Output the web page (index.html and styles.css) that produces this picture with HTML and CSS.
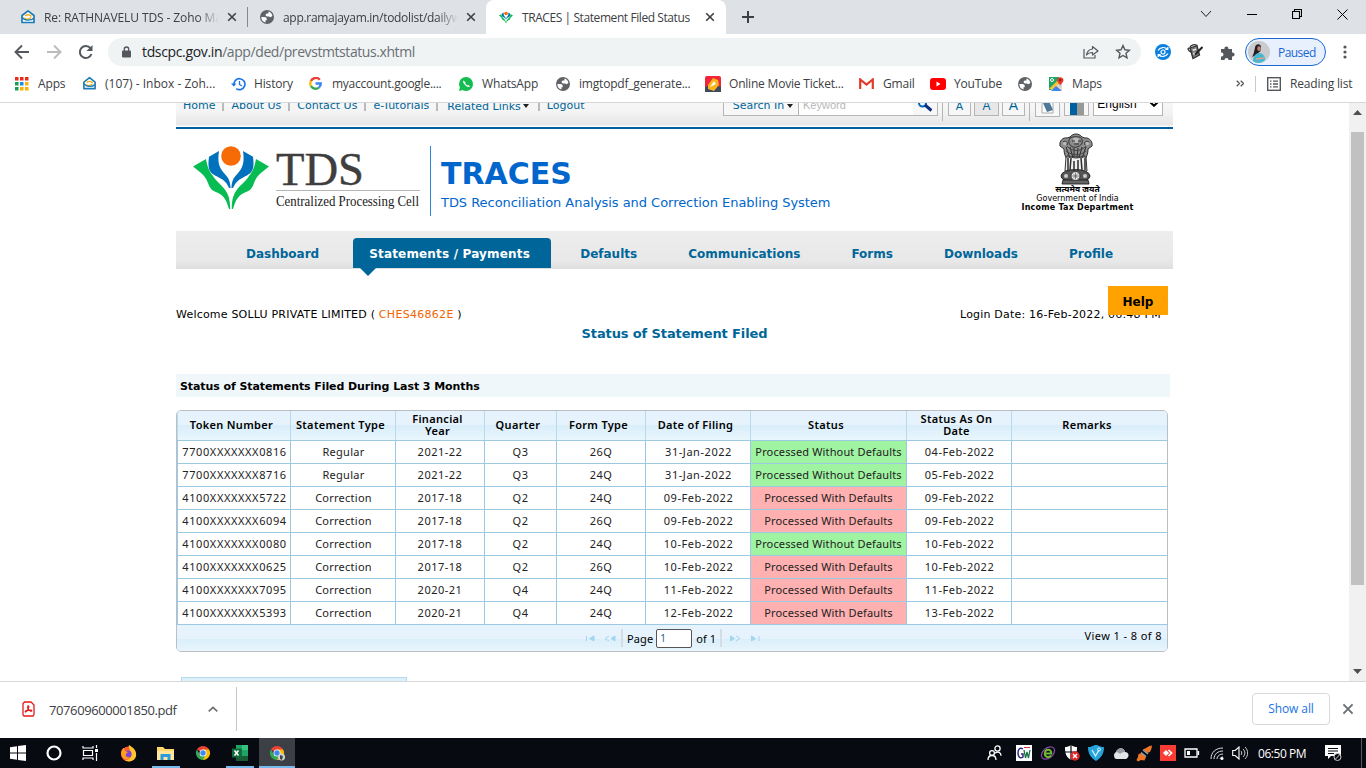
FILE: index.html
```html
<!DOCTYPE html>
<html lang="en">
<head>
<meta charset="utf-8">
<title>TRACES | Statement Filed Status</title>
<link rel="stylesheet" href="styles.css">
</head>
<body>
<svg class="defs" width="0" height="0">
  <symbol id="zoho" viewBox="0 0 16 16"><path d="M2 6.500 8 1.800l6 4.700V13.500H2z" fill="#fff" stroke="#1c7cb8" stroke-width="1.700" stroke-linejoin="round"/><path d="M5 7c2-2 5-1.500 6.500.5M4 9c2 2 5 1.500 7-.5" stroke="#f2b01e" stroke-width="1.500" fill="none"/><path d="M2 8c2 4 9 4 12 1" stroke="#1c7cb8" stroke-width="1.400" fill="none"/></symbol>
  <symbol id="globe" viewBox="0 0 16 16"><circle cx="8" cy="8" r="7" fill="#5f6368"/><path d="M2.300 8h3c1.700 0 2.400.8 2.400 2v1.200H6.500v2.300C4 13 2.300 11 2.300 8zM9.500 2.500c2 .5 3.300 2 3.900 4l-1 1.300c-.8.8-1.700.4-2.200-.4H8.300C7 7.400 6.500 6.600 6.700 5.600c.2-.8.9-1.200 1.800-1.200h1z" fill="#fff"/></symbol>
  <symbol id="lotus" viewBox="0 0 76 64"><circle cx="38" cy="10" r="9.800" fill="#f76b07"/><path id="petal" d="M26 5 16 10.700C14 26 18 27 25 31 33 35 34 38 36 42L37.600 42C37 30 32 30 28 23 25 18 25 12 26 5z" fill="#0071bc"/><path d="M50 5 60 10.700C62 26 58 27 51 31 43 35 42 38 40 42L38.400 42C39 30 44 30 48 23 51 18 51 12 50 5z" fill="#0071bc"/><path d="M13 13 0 20.500C8 27 12 29 15 37 18 46 22 45 27 48 33 52 34 57 36 63L37.200 63C37.500 42 27 41 20 30 15 24 14 18 13 13z" fill="#07bc53"/><path d="M63 13 76 20.500C68 27 64 29 61 37 58 46 54 45 49 48 43 52 42 57 40 63L38.800 63C38.500 42 49 41 56 30 61 24 62 18 63 13z" fill="#07bc53"/></symbol>
  <symbol id="x" viewBox="0 0 10 10"><path d="m1.200 1.200 7.600 7.600M8.800 1.200 1.200 8.800" stroke="currentColor" stroke-width="1.600" fill="none"/></symbol>
  <symbol id="chrome" viewBox="0 0 16 16"><path d="M8 8 1.900 4.500A7 7 0 0 1 14.100 4.500z" fill="#e94335"/><path d="M8 8V4.500h6.100A7 7 0 0 1 8 15z" fill="#fbbc05"/><path d="M8 8 10.500 10 8 15A7 7 0 0 1 1.900 4.500L5 9.700z" fill="#34a853"/><circle cx="8" cy="8" r="3.500" fill="#fff"/><circle cx="8" cy="8" r="2.700" fill="#4285f4"/></symbol>
</svg>

<header class="tabs">
  <div class="tab tab-a"><svg width="16" height="16"><use href="#zoho"/></svg><span class="fade">Re: RATHNAVELU TDS - Zoho Mail</span><svg class="close" width="10" height="10"><use href="#x"/></svg></div>
  <div class="tab tab-b"><svg width="16" height="16"><use href="#globe"/></svg><span class="fade">app.ramajayam.in/todolist/dailywork</span><svg class="close" width="10" height="10"><use href="#x"/></svg></div>
  <div class="tab tab-c"><svg width="14" height="13"><use href="#lotus"/></svg><span>TRACES | Statement Filed Status</span><svg class="close" width="10" height="10"><use href="#x"/></svg></div>
  <svg class="plus" width="12" height="12"><path d="M6 0v12M0 6h12" stroke="#3c4043" stroke-width="2"/></svg>
  <div class="winctl">
    <svg width="12" height="8"><path d="m1 1 5 5.500L11 1" fill="none" stroke="#222"/></svg>
    <svg width="10" height="8"><path d="M0 4.500h10" stroke="#000"/></svg>
    <svg width="10" height="10"><path d="M.5 2.500h7v7h-7zM2.500 2.500v-2h7v7h-2" fill="none" stroke="#000" stroke-width="1.100"/></svg>
    <svg width="11" height="11"><path d="m.5.5 10 10M10.500.5l-10 10" stroke="#000" fill="none"/></svg>
  </div>
</header>

<div class="toolbar">
  <svg width="16" height="16"><path d="M15 8H2M8 1.500 1.500 8 8 14.500" fill="none" stroke="#54585c" stroke-width="1.900"/></svg>
  <svg width="16" height="16"><path d="M1 8h13M8 1.500 14.500 8 8 14.500" fill="none" stroke="#babcbe" stroke-width="1.900"/></svg>
  <svg width="16" height="16"><path d="M13.500 10A6 6 0 1 1 12.500 4.200" fill="none" stroke="#54585c" stroke-width="2"/><path d="M14.500 1v6h-6z" fill="#54585c"/></svg>
  <div class="omni">
    <svg width="9" height="12"><path d="M2.300 5V3.200a2.200 2.200 0 0 1 4.400 0V5" fill="none" stroke="#54585c" stroke-width="1.300"/><rect y="4.500" width="9" height="7" rx="1" fill="#54585c"/></svg>
    <span class="url"><b>tdscpc.gov.in</b>/app/ded/prevstmtstatus.xhtml</span>
    <svg width="16" height="14"><path d="M1 4v9h11v-3" fill="none" stroke="#54585c" stroke-width="1.200"/><path d="M9.500 1.500 15 6l-5.500 4V7.500C6.500 7.500 5 8 3.500 10 4 6.500 6 4.500 9.500 4z" fill="none" stroke="#54585c" stroke-width="1.200" stroke-linejoin="round"/></svg>
    <svg width="16" height="16"><path d="m8 1.500 1.900 4.300 4.600.4L11 9.300l1 4.600-4-2.400-4 2.400 1-4.600L1.500 6.200l4.600-.4z" fill="none" stroke="#54585c" stroke-width="1.400"/></svg>
  </div>
  <svg class="ext1" width="16" height="16"><circle cx="8" cy="8" r="8" fill="#0b7fe0"/><path d="M3 6.500c2-3.500 7-4 9.500-1M13 9.500c-2 3.500-7 4-9.500 1M12.800 3v2.500h-2.500M3.200 13v-2.500h2.500" fill="none" stroke="#fff" stroke-width="1.200"/><circle cx="8" cy="8" r="2" fill="none" stroke="#fff" stroke-width="1.200"/></svg>
  <svg class="ext2" width="16" height="16"><path d="m3 4 7-2.500L12.500 11 6 14.500z" fill="#777" stroke="#333" stroke-width="1.300"/><path d="m5.500 5.500 3.500-1 .4 1.500-3.500 1zM6 9l3-1 .5 1.500-3 1.500z" fill="#eee"/><path d="M3 4.500C0 3 .5 7 4.500 8M3 3.500C4 .5 8 0 10 1.500" stroke="#333" stroke-width="1.300" fill="none"/><path d="M8 10.500 15.500 3" stroke="#222" stroke-width="2"/></svg>
  <svg class="ext3" width="15" height="15"><path d="M1 4h3.500a2 2 0 1 1 3.800 0H12v3.600a2 2 0 1 1 0 3.800V15H8.500a2 2 0 1 0-4 0H1v-3.600a2 2 0 1 0 0-3.900z" fill="#54585c"/></svg>
  <div class="profile"><svg width="22" height="22"><circle cx="11" cy="11" r="11" fill="#c9cbcf"/><path d="M7 7c0-4 5-5 6-1.500L12.500 10 8 14l-4 2c2-3 2-6 3-9z" fill="#251c20"/><ellipse cx="11" cy="7.500" rx="1.800" ry="2.500" fill="#b98370"/><path d="M5 20c0-5 3-8 6-8s6 2 6 7c-3 3.500-9 4-12 1z" fill="#49b6cf"/><path d="m8 18 8-1" stroke="#d9a58f" stroke-width="1.500"/></svg><span>Paused</span></div>
  <svg class="dots" width="4" height="14"><g fill="#54585c"><circle cx="2" cy="2" r="1.600"/><circle cx="2" cy="7" r="1.600"/><circle cx="2" cy="12" r="1.600"/></g></svg>
</div>

<nav class="marks">
  <a><svg width="14" height="14"><g fill="#ea2a1c"><path d="M0 0h3.500v3.500H0zM5 0h3.500v3.500H5zM10 0h3.500v3.500H10z"/></g><path d="M0 5h3.500v3.500H0zM0 10h3.500v3.500H0z" fill="#16a050"/><path d="M5 5h3.500v3.500H5z" fill="#1c8ae8"/><path d="M10 5h3.500v3.500H10zM5 10h3.500v3.500H5zM10 10h3.500v3.500H10z" fill="#f8b406"/></svg><span>Apps</span></a>
  <a><svg width="15" height="15"><use href="#zoho"/></svg><span>(107) - Inbox - Zoh...</span></a>
  <a><svg width="15" height="14"><path d="M3 8A5.500 5.500 0 1 1 5.200 11.600" fill="none" stroke="#1a73e8" stroke-width="1.600"/><path d="M0 6.500h5.500L2.800 9.500z" fill="#1a73e8"/><path d="M8.500 4v3.500l2.500 1.500" fill="none" stroke="#1a73e8" stroke-width="1.300"/></svg><span>History</span></a>
  <a><svg width="13" height="13" viewBox="0 0 12 12"><g fill="none" stroke-width="2.200"><path d="M10 2.600A4.900 4.900 0 0 0 1.800 3.700" stroke="#ea4335"/><path d="M1.800 3.700a4.900 4.900 0 0 0 0 4.600" stroke="#fbbc05"/><path d="M1.800 8.300a4.900 4.900 0 0 0 7.300 1.500" stroke="#34a853"/><path d="M9.100 9.800A4.900 4.900 0 0 0 10.900 6H6" stroke="#4285f4"/></g></svg><span class="t0">myaccount.google....</span></a>
  <a><svg width="14" height="14"><circle cx="7" cy="7" r="7" fill="#12bd50"/><path d="m0 14 1-4 3 3z" fill="#12bd50"/><path d="M4.500 3.500c-1 1-.5 2.500 1.500 4.500s4 2.700 5 1.500l-1.700-1.600-1 .7L6 6.300l.7-.9z" fill="#fff"/></svg><span>WhatsApp</span></a>
  <a><svg width="16" height="16"><use href="#globe"/></svg><span class="t1">imgtopdf_generate...</span></a>
  <a><svg width="16" height="16"><rect width="16" height="16" rx="2" fill="#f02638"/><path d="M0 11 8 8l8 3v5H0z" fill="#3c4a5c"/><path d="M3 9 8 2l5 2 1 5-5 6-6-2z" fill="#f9b51c"/><path d="m5 11 4-6 2 3z" fill="#fff"/></svg><span class="t1">Online Movie Ticket...</span></a>
  <a><svg width="15" height="11"><path d="M1.200 11V1.500l6.300 5 6.300-5V11" fill="none" stroke="#e3392b" stroke-width="2.200"/></svg><span class="t1">Gmail</span></a>
  <a><svg width="16" height="12"><rect width="16" height="12" rx="3" fill="#f00"/><path d="m6.500 3.500 4 2.500-4 2.500z" fill="#fff"/></svg><span class="t1">YouTube</span></a>
  <a><svg width="16" height="16"><use href="#globe"/></svg></a>
  <a><svg width="15" height="15"><path d="M0 1h10v6L2 14H0z" fill="#1fa463"/><path d="m0 13 12-12v13z" fill="#f5c33b"/><path d="m2 15 5-5 6 5z" fill="#3f83f1"/><path d="m7 9 5 5h1V7z" fill="#d8d8d8"/><path d="M11 10c0-2-3-3.500-3-6a3.300 3.300 0 0 1 6.500 0c0 2.500-3 4-3.500 6z" fill="#ea3a2d"/><circle cx="11.200" cy="4" r="1.200" fill="#8c1c14"/><circle cx="3" cy="4" r="1.500" fill="none" stroke="#fff"/></svg><span>Maps</span></a>
  <a class="more"><svg width="8" height="7"><path d="m.7.7 2.800 2.800L.7 6.300M4.700.7l2.800 2.800-2.800 2.800" fill="none" stroke="#54585c" stroke-width="1.300"/></svg></a>
  <a class="reading"><svg width="14" height="14"><rect x=".7" y=".7" width="12.600" height="12.600" fill="none" stroke="#54585c" stroke-width="1.400"/><path d="M3 4.200h1.500M3 7h1.500M3 9.800h1.500M6 4.200h5M6 7h5M6 9.800h5" stroke="#54585c" stroke-width="1.300"/></svg><span>Reading list</span></a>
</nav>

<main class="view">
  <div class="page">
    <div class="topbar">
      <div class="links"><a>Home</a><i></i><a>About Us</a><i></i><a>Contact Us</a><i></i><a>e-Tutorials</a><i></i><a class="low">Related Links<svg width="6" height="4"><path d="M0 0h6L3 4z" fill="#222"/></svg></a><i></i><a>Logout</a></div>
      <div class="tools">
        <div class="box sin">Search In<svg width="6" height="4"><path d="M0 0h6L3 4z" fill="#222"/></svg></div><div class="box key">Keyword</div><div class="box mag"><svg width="14" height="14"><circle cx="4.500" cy="4" r="3.500" fill="none" stroke="#06b" stroke-width="2"/><path d="m7 6 6.500 5.500" stroke="#0b2f7e" stroke-width="3"/></svg></div>
        <i class="sep s1"></i>
        <div class="box a1">A</div><div class="box a2">A</div><div class="box a3">A</div>
        <i class="sep s2"></i>
        <div class="box p1"><svg width="13" height="16"><path d="M1 1h11v14H1z" fill="#fff" stroke="#a9a9a9"/><path d="m2 5 6-2 4 9-6 2z" fill="#4f7797"/></svg></div>
        <div class="box p2"><svg width="14" height="18"><path d="M0 0h7v18H0z" fill="#0060a0"/><path d="M7 0h7v18H7z" fill="#989898"/></svg></div>
        <div class="box lang">English<svg width="10" height="6"><path d="m1 1 4 3.800L9 1" fill="none" stroke="#000" stroke-width="2"/></svg></div>
      </div>
    </div>
    <div class="brand">
      <svg class="flower" width="76" height="64"><use href="#lotus"/></svg>
      <div class="tds"><svg width="144" height="66"><text class="tds-big" x="0" y="38.500" textLength="88" lengthAdjust="spacingAndGlyphs">TDS</text><path d="M0 44.500h144" stroke="#b5b5b5"/><text class="tds-small" x="0" y="60" textLength="143" lengthAdjust="spacingAndGlyphs">Centralized Processing Cell</text></svg></div>
      <div class="traces"><h1>TRACES</h1><p>TDS Reconciliation Analysis and Correction Enabling System</p></div>
      <div class="govt">
        <svg width="36" height="52" viewBox="0 0 36 52"><g stroke="#1c1c1c" fill="#8c8c8c" stroke-width=".9"><path d="M12 4c3-4 9-4 12 0l3 1c5-1 8 5 7 8l-4 3c0 6-2 9-4 11H10c-3-3-4-7-4-11l-4-3C1 8 5 4 9 5z"/><path d="M8 24h20l1 14H7z" fill="#eee"/><ellipse cx="17.500" cy="43" rx="14.500" ry="6.500" fill="#555"/><path d="M5 47h25l1 4H4z" fill="#666"/></g><g fill="#bbb"><circle cx="18" cy="7" r="3"/><circle cx="7" cy="10" r="2.200"/><circle cx="29" cy="10" r="2.200"/></g><g fill="none" stroke="#2d2d2d"><path d="M12 5c-3 4 0 8 3 9s8-1 9-4-1-6-3-6-6-1-9 1zM5 9c3-2 5 0 4 3M31 9c-3-2-5 0-4 3M8 14l4 11M12 14l3 11M16 15v10M20 15l-1 10M24 14l-3 11M28 14l-4 11M14 8h3M20 8h3M16 11h5"/><path d="M9 13c5 6 14 6 19 0M8 18c7 5 14 5 20 0M9 22c7 4 12 4 18 0" stroke="#444"/><path d="M10 25v13M13 25l-1 12M16 28v10M20 27v11M23 25l1 12M27 25v12" stroke-width="1.500"/></g><circle cx="17.500" cy="43" r="4.500" fill="#eee" stroke="#333"/><path d="M14 43h7M17.500 39.500v7M15 40.500l5 5M20 40.500l-5 5" stroke="#555" stroke-width=".7"/><circle cx="8" cy="43" r="2" fill="#ccc"/><circle cx="27" cy="43" r="2" fill="#ccc"/></svg>
        <span class="hi">सत्यमेव जयते</span><span class="gi">Government of India</span><span class="it">Income Tax Department</span>
      </div>
    </div>
    <nav class="menu"><a>Dashboard</a><a class="on">Statements / Payments</a><a>Defaults</a><a>Communications</a><a>Forms</a><a>Downloads</a><a>Profile</a></nav>
    <div class="welcome"><span class="w1">Welcome SOLLU PRIVATE LIMITED ( <b>CHES46862E</b> )</span><span class="w2">Login Date: 16-Feb-2022, 06:48 PM</span><button class="help">Help</button></div>
    <h2>Status of Statement Filed</h2>
    <h3>Status of Statements Filed During Last 3 Months</h3>
    <div class="gridbox">
      <table>
        <colgroup><col class="c1"><col class="c2"><col class="c3"><col class="c4"><col class="c5"><col class="c6"><col class="c7"><col class="c8"><col class="c9"></colgroup>
        <thead><tr><th>Token Number</th><th>Statement Type</th><th>Financial<br>Year</th><th>Quarter</th><th>Form Type</th><th>Date of Filing</th><th>Status</th><th>Status As On<br>Date</th><th>Remarks</th></tr></thead>
        <tbody>
          <tr><td>7700XXXXXXX0816</td><td>Regular</td><td>2021-22</td><td>Q3</td><td>26Q</td><td>31-Jan-2022</td><td class="ok">Processed Without Defaults</td><td>04-Feb-2022</td><td></td></tr>
          <tr><td>7700XXXXXXX8716</td><td>Regular</td><td>2021-22</td><td>Q3</td><td>24Q</td><td>31-Jan-2022</td><td class="ok">Processed Without Defaults</td><td>05-Feb-2022</td><td></td></tr>
          <tr><td>4100XXXXXXX5722</td><td>Correction</td><td>2017-18</td><td>Q2</td><td>24Q</td><td>09-Feb-2022</td><td class="bad">Processed With Defaults</td><td>09-Feb-2022</td><td></td></tr>
          <tr><td>4100XXXXXXX6094</td><td>Correction</td><td>2017-18</td><td>Q2</td><td>26Q</td><td>09-Feb-2022</td><td class="bad">Processed With Defaults</td><td>09-Feb-2022</td><td></td></tr>
          <tr><td>4100XXXXXXX0080</td><td>Correction</td><td>2017-18</td><td>Q2</td><td>24Q</td><td>10-Feb-2022</td><td class="ok">Processed Without Defaults</td><td>10-Feb-2022</td><td></td></tr>
          <tr><td>4100XXXXXXX0625</td><td>Correction</td><td>2017-18</td><td>Q2</td><td>26Q</td><td>10-Feb-2022</td><td class="bad">Processed With Defaults</td><td>10-Feb-2022</td><td></td></tr>
          <tr><td>4100XXXXXXX7095</td><td>Correction</td><td>2020-21</td><td>Q4</td><td>24Q</td><td>11-Feb-2022</td><td class="bad">Processed With Defaults</td><td>11-Feb-2022</td><td></td></tr>
          <tr><td>4100XXXXXXX5393</td><td>Correction</td><td>2020-21</td><td>Q4</td><td>24Q</td><td>12-Feb-2022</td><td class="bad">Processed With Defaults</td><td>13-Feb-2022</td><td></td></tr>
        </tbody>
      </table>
      <div class="pager">
        <div class="pg">
          <svg width="36" height="7"><g stroke="#a3d5f0" fill="#a3d5f0"><path d="M1.500 1v5"/><path d="M9 1v5L4.500 3.500z"/><path d="m24 1-4 2.500 4 2.500" fill="none"/><path d="M30 1v5l-4-2.500z"/></g></svg>
          <i></i><span>Page</span><span class="num">1</span><span>of 1</span><i></i>
          <svg width="32" height="7"><g stroke="#a3d5f0" fill="#a3d5f0"><path d="M1.500 1v5l4-2.500z"/><path d="m7 1 4 2.500L7 6" fill="none"/><path d="M22.500 1v5l4-2.500z"/><path d="M30 1v5"/></g></svg>
        </div>
        <span class="cnt">View 1 - 8 of 8</span>
      </div>
    </div>
    <div class="nextbox"></div>
  </div>
  <div class="scroll"><svg width="9" height="5"><path d="m0 5 4.500-5L9 5z" fill="#505050"/></svg><i></i><svg width="9" height="5"><path d="m0 0 4.500 5L9 0z" fill="#505050"/></svg></div>
</main>

<div class="downloads">
  <svg width="13" height="16"><path d="M1 2.500 2.500 1H9l3 3v9.500L11 15H2l-1-1z" fill="#fff" stroke="#e41b1b" stroke-width="1.300"/><path d="M3.500 11c-1.200-1 1.500-2 5.500-1.800 1.500.3.500 1.500-.8.800C6.500 8.800 5.500 6.500 5.800 5.300c.4-1 1.300-.3.9 1.200-.4 1.500-1.700 4-3.200 4.500z" fill="none" stroke="#e41b1b" stroke-width="1.200"/></svg>
  <span class="file">707609600001850.pdf</span>
  <svg class="up" width="10" height="6"><path d="m.7 5.300 4.300-4 4.300 4" fill="none" stroke="#6b6f73" stroke-width="1.600"/></svg>
  <i></i>
  <span class="showall">Show all</span>
  <svg class="dx" width="12" height="12"><use href="#x"/></svg>
</div>

<footer class="taskbar">
  <div class="apps">
    <a><svg width="16" height="16"><path d="M0 2.300 7 1.300V7.600H0zM8 1.100 16 0v7.600H8zM0 8.500h7v6.300l-7-1zM8 8.500h8V16l-8-1.100z" fill="#fff"/></svg></a>
    <a><svg width="16" height="16"><circle cx="8" cy="8" r="6.500" fill="none" stroke="#fff" stroke-width="2.200"/></svg></a>
    <a><svg width="17" height="16"><path d="M1 1v2h10V1M1 15v-2h10v2M1.500 5.500h9v5h-9zM14.500 0v3M14.500 8v8" fill="none" stroke="#fff" stroke-width="1.200"/><path d="M13 4h3v3h-3z" fill="#fff"/></svg></a>
    <a><svg width="17" height="17"><circle cx="8.500" cy="9" r="7.500" fill="#ff5a36"/><path d="M9 0c3 2 8 5 7 11-1 5-7 7-11 4 5 0 8-4 6-8-1-2-3-4-2-7z" fill="#ffc629"/><circle cx="8" cy="9" r="3.500" fill="#7a44d8"/><path d="M1 8c0-3 2-5 3-5l1 3 3 1-2 2c-1 2 1 4 4 3-3 4-9 2-9-4z" fill="#ff9a1f"/></svg></a>
    <a class="run"><svg width="17" height="15"><path d="M0 1h6l2 2h9v11H0z" fill="#ffd869"/><path d="M0 5h17v9H0z" fill="#ffe69b"/><path d="M3.500 14V8h10v6h-3v-3h-4v3z" fill="#2b9be0"/></svg></a>
    <a><svg width="16" height="16"><use href="#chrome"/></svg></a>
    <a class="run"><svg width="16" height="16"><path d="M4 0h12v16H4z" fill="#21a366"/><path d="M10 0h6v5h-6z" fill="#33c481"/><path d="M4 5h6v6H4z" fill="#107c41"/><path d="M4 11h12v5H4z" fill="#185c37"/><path d="M0 3.500h9.500v9H0z" fill="#0e6b39"/><path d="m2.500 5.500 4 5M6.500 5.500l-4 5" stroke="#fff" stroke-width="1.500"/></svg></a>
    <a class="run act"><svg width="16" height="16"><use href="#chrome"/><circle cx="12.500" cy="12" r="3.500" fill="#cfd2d4"/><path d="M11 14V10l3 1-1 4z" fill="#444"/></svg></a>
  </div>
  <div class="tray">
    <a class="ppl"><svg width="15" height="16"><g fill="none" stroke="#fff" stroke-width="1.300"><circle cx="5" cy="8" r="2.400"/><path d="M1 15c0-3 2-4.500 4-4.500s4 1.500 4 4.500"/><circle cx="10.500" cy="3.500" r="2.600"/><path d="M8 8.200c3-2.500 6-.5 6 2.500"/></g></svg></a>
    <a><svg width="16" height="16"><path d="M0 0h16v16H0z" fill="#fff"/><path d="M7 4C4 2 2 4 2 8s2 6 5 4V9H5" fill="none" stroke="#2e2a80" stroke-width="1.500"/><path d="m8 5 1.500 8 1.500-6 1.500 6L14 5" fill="none" stroke="#187844" stroke-width="1.300"/><path d="M8 2.500h6" stroke="#d33"/></svg></a>
    <a><svg width="16" height="16"><ellipse cx="8" cy="8" rx="7.500" ry="5" transform="rotate(-40 8 8)" fill="none" stroke="#7d4a9c" stroke-width="1.300"/><path d="M5 8.500h6.300C11.500 3.500 5 3.500 4.800 8.500c0 4 4.500 4.500 6.200 2" fill="none" stroke="#6fb934" stroke-width="2"/></svg></a>
    <a><svg width="16" height="16"><path d="M7 0c2 1.500 4 2 6 2 0 6-1 10-6 13C2 12 1 8 1 2c2 0 4-.5 6-2z" fill="#fff"/><path d="M7 0v15M1 7h12" stroke="#080a10" stroke-width="1.200"/><circle cx="11" cy="11" r="4.700" fill="#dc2626"/><path d="m9 9 4 4M13 9l-4 4" stroke="#fff" stroke-width="1.400"/></svg></a>
    <a><svg width="16" height="16"><path d="M0 2c5 0 5-2 8-2s3 2 8 2c0 7-3 11-8 14C3 13 0 9 0 2z" fill="#26a3dd"/><path d="m4 5 3.500 6L11 5" fill="none" stroke="#d7f3ff" stroke-width="1.300"/><circle cx="11" cy="4.500" r="1.500" fill="none" stroke="#d7f3ff"/></svg></a>
    <a><svg width="17" height="11"><path d="M4 11a4 4 0 0 1 0-7c2-5 8-5 9 0 4 0 5 5 1 7z" fill="#e3e5e7"/><path d="M4 4c2-5 8-5 9 0-3 0-4 1-5 2-1-1-2-2-4-2z" fill="#9a9da0"/></svg></a>
    <a><svg width="17" height="17"><path d="M10 3 13.500 1 16 .5l-.5 3L14 7l-3 1-4-3.500zM2.500 9l3.500-1 4 4-1.500 3.500L5 15l-3 1.500L.5 15 2 12z" fill="#ee7624"/><path d="m5 7.500 5 4M7 5l5 4" stroke="#8fa3aa" stroke-width="1.600"/></svg></a>
    <a><svg width="16" height="16"><path d="M0 0h16v16H0z" fill="#fb3c35"/><path d="m3 8 3-3 3 3-3 3z" fill="#fff"/><path d="m8.500 5 3 3-3 3" fill="none" stroke="#fff" stroke-width="1.700"/></svg></a>
    <a><svg width="16" height="10"><path d="M1 1h12v8H1zM14.500 3v4" fill="none" stroke="#fff" stroke-width="1.300"/><path d="M3 3h3v4H3z" fill="#fff"/></svg></a>
    <a class="wf"><svg width="14" height="13"><g fill="none" stroke="#ddd"><path d="M1 12C1 5 6 1 13 1M4 12c0-5 4-8 9-8M7 12c0-3 3-5 6-5M10 12c0-1 1.500-2 3-2"/></g><circle cx="12" cy="11.500" r="1.500" fill="#fff"/></svg></a>
    <a class="vol"><svg width="16" height="14"><path d="M.7 4.500h2.500L7 1v12L3.200 9.500H.7z" fill="none" stroke="#fff" stroke-width="1.100"/><path d="M9 5c1 1 1 3 0 4M11 3c2.500 2.500 2.500 5.500 0 8M13 1c3.500 3.500 3.500 8.500 0 12" fill="none" stroke="#ccc"/></svg></a>
    <span class="clock">06:50 PM</span>
    <a class="note"><svg width="17" height="16"><path d="M0 0h16v11H6l-3 3v-3H0z" fill="#fff"/><path d="M3 3.500h10M3 6h10M3 8.500h6" stroke="#080a10"/><circle cx="12.500" cy="12" r="3.500" fill="#080a10" stroke="#ccc"/><path d="m10 14.500 5-5" stroke="#ccc"/></svg></a>
    <i></i>
  </div>
</footer>
</body>
</html>
```
FILE: styles.css
```css
* { box-sizing: border-box; }
body { margin: 0; width: 1366px; height: 768px; overflow: hidden; display: flex; flex-direction: column; background: #fff; font: 12px "Open Sans", "Noto Sans", sans-serif; color: #3c4043; white-space: nowrap; }
svg { display: block; flex: none; }
.defs { position: absolute; }
i, em, b { font-style: normal; font-weight: normal; }

.tabs { height: 34px; flex: none; background: #dee1e6; display: flex; align-items: center; }
.tab { display: flex; align-items: center; height: 34px; color: #3c4043; }
.fade { overflow: hidden; }
.tab-a { width: 248px; padding-left: 20px; border-right: 1px solid #85888c; height: 20px; }
.tab-a span { margin-left: 8px; width: 175px; letter-spacing: -.1px; }
.tab-a .close { margin-left: 8px; }
.tab-b { width: 238px; padding-left: 11px; }
.tab-b span { margin-left: 8px; width: 175px; letter-spacing: -.3px; }
.tab-b .close { margin-left: 8px; }
.fade { -webkit-mask-image: linear-gradient(90deg, #000 88%, transparent); mask-image: linear-gradient(90deg, #000 88%, transparent); }
.tab-c { width: 240px; padding-left: 13px; background: #fff; border-radius: 8px 8px 0 0; }
.tab-c span { margin-left: 9px; width: 172px; letter-spacing: -.42px; }
.tab-c .close { margin-left: 11px; }
.close { color: #3c4043; }
.plus { margin-left: 16px; }
.winctl { margin-left: auto; display: flex; align-items: center; gap: 35px; padding: 0 18px 6px 0; }

.toolbar { height: 36px; flex: none; display: flex; align-items: center; padding-left: 14px; }
.toolbar > svg { margin-right: 16px; }
.omni { width: 1033px; height: 28px; border-radius: 14px; background: #eff3f4; display: flex; align-items: center; padding: 0 10px 0 14px; margin-left: -2px; }
.omni .url { margin: 0 auto 1px 11px; font-size: 14px; letter-spacing: -.42px; color: #6a6e73; }
.omni b { color: #202124; letter-spacing: -.35px; }
.omni svg + svg { margin-left: 16px; }
.toolbar > .ext1 { margin: 0 0 0 14px; }
.toolbar > .ext2 { margin: 0 0 0 16px; }
.toolbar > .ext3 { margin: 0 0 0 17px; }
.profile { margin-left: 10px; width: 81px; height: 28px; border: 1px solid #1967d2; border-radius: 14px; background: #e8f0fe; display: flex; align-items: center; padding-left: 2px; color: #1967d2; }
.profile span { margin-left: 8px; letter-spacing: -.55px; }
.toolbar > .dots { margin: 0 0 0 17px; }

.marks { height: 33px; flex: none; border-bottom: 1px solid #d6d8da; padding: 0 0 5px 15px; display: grid; grid-template-columns: 67px 149px 78px 150px 96px 150px 154px 71px 87px 32px 187px 31px 1fr; align-items: center; }
.marks a { display: grid; grid-template-columns: 23px auto; align-items: center; justify-content: start; letter-spacing: -.15px; }
.marks a:nth-child(2) { letter-spacing: 0; }
.marks .t0 { letter-spacing: -.25px; }
.marks .t1 { letter-spacing: -.2px; margin-left: 1px; }
.marks .more { height: 16px; border-right: 1px solid #c8cacc; width: 20px; }

.view { height: 578px; flex: none; overflow: hidden; display: flex; justify-content: space-between; font-family: "DejaVu Sans", sans-serif; }
.page { width: 997px; margin-left: 176px; color: #000; }
.topbar { height: 50px; margin-top: -24px; background: linear-gradient(#fff, #f4f4f4 32px, #e6e6e6 46px, #fff 47px); border-bottom: 2px solid #0060a0; display: flex; justify-content: space-between; }
.links { display: flex; align-items: center; height: 52px; padding-left: 7px; color: #006699; font-size: 11px; }
.links i { width: 2px; height: 12px; background: #bbb; margin: 0 7px; }
.links .low { display: flex; align-items: center; gap: 2px; padding: 2px 2px 0 2px; }
.tools { display: flex; padding: 13px 10px 0 0; color: #006699; }
.box { border: 1px solid #b5b5b5; height: 24px; display: flex; align-items: center; justify-content: center; background: #f7f7f7; font-size: 11px; padding-top: 3px; }
.sin { width: 75px; border-right: 0; padding-left: 4px; gap: 3px; }
.key { width: 115px; border-left: 1px solid #b5b5b5; background: #fff; color: #b7b7b7; justify-content: flex-start; font: 11px "Liberation Sans", sans-serif; padding: 1px 0 0 4px; border-right: 0; }
.mag { width: 25px; border-left: 0; }
.sep { width: 1px; height: 29px; background: #b5b5b5; }
.s1 { margin: 0 5px 0 4px; }
.a1, .a2, .a3 { margin-right: 3px; width: 23px; font: 11px "Liberation Sans", sans-serif; }
.a2 { background: #e8e8e8; font-size: 12px; width: 25px; }
.a3 { font-size: 14px; padding-top: 1px; margin-right: 4px; }
.s2 { margin: 0 5px 0 0; }
.p1, .p2 { width: 25px; margin-right: 4px; }
.p1 { height: 25px; }
.lang { width: 70px; background: #fff; color: #000; font: 12px "Liberation Sans", sans-serif; gap: 12px; padding-top: 0; }

.brand { height: 102px; display: flex; }
.flower { margin: 17px 8px 0 17px; }
.tds { margin: 17px 10px 0 -1px; width: 144px; }
.tds-big { font: 46px "Liberation Serif", serif; fill: #3e3e3e; stroke: #3e3e3e; stroke-width: .4px; }
.tds-small { font: 14px "Liberation Serif", serif; fill: #222; }
.traces { margin-top: 17px; height: 70px; border-left: 1px solid #2a87d8; padding-left: 10px; color: #0066cc; }
h1 { margin: 10px 0 0; font: bold 30px/36px "DejaVu Sans", sans-serif; }
.traces p { margin: 2px 0 0; font-size: 13px; line-height: 18px; letter-spacing: -.04px; }
.govt { margin: 4px 39px 0 auto; display: flex; flex-direction: column; align-items: center; width: 113px; }
.govt svg { margin-left: -3px; }
.hi { font: bold 8.5px/9px "Noto Sans Devanagari", "Noto Sans", sans-serif; }
.gi { font-size: 8px; line-height: 10px; }
.it { font-size: 8px; line-height: 8px; font-weight: bold; letter-spacing: .22px; }

.menu { height: 38px; background: linear-gradient(#ededed, #e8e8e8 80%, #dedede); padding: 7px 0 0 53px; display: flex; font-size: 12px; font-weight: bold; color: #006699; }
.menu a { line-height: 32px; height: 31px; padding: 0 17px; }
.menu a + a { margin-left: 17px; }
.menu .on { position: relative; background: #006699; color: #fff; border-radius: 4px 4px 0 0; width: 198px; height: 30px; padding: 0 0 0 16px; letter-spacing: .17px; }
.menu .on + a { margin-left: 12px; }
.menu .on::after { content: ""; position: absolute; left: 7px; top: 30px; border: 8px solid transparent; border-top-color: #006699; border-bottom: 0; }

.welcome { position: relative; height: 52px; padding-top: 39px; display: flex; justify-content: space-between; font-size: 11px; line-height: 14px; padding-right: 12px; letter-spacing: .2px; }
.w1 b { color: #f26500; letter-spacing: .3px; }
.help { position: absolute; left: 932px; top: 17px; width: 60px; height: 29px; border: 0; background: #ffa200; font: bold 12px/18px "DejaVu Sans", sans-serif; padding: 2px 0 0; }
h2 { margin: 5px 0 0; text-align: center; font: bold 13px/16px "DejaVu Sans", sans-serif; letter-spacing: -.12px; color: #006699; }
h3 { margin: 32px 3px 13px 0; background: #eff7fb; height: 23px; padding-left: 4px; font: bold 11px/25px "DejaVu Sans", sans-serif; letter-spacing: -.08px; }
.gridbox { width: 992px; height: 242px; border: 1px solid #b9bfc4; border-radius: 5px; overflow: hidden; font-family: "Noto Sans", sans-serif; }
table { border-collapse: collapse; table-layout: fixed; width: 990px; font-size: 11px; letter-spacing: .5px; }
th, td { padding: 0; text-align: center; border: 1px solid #9bc9e2; }
thead { background: linear-gradient(#e6f2fc 50%, #d9eefa 50%, #e9f6fd); }
th { height: 29px; line-height: 12px; border-top: 0; border-color: #b9daec; border-bottom-color: #9bc9e2; font-weight: 600; letter-spacing: .32px; padding: 0 5px 1px 0; }
td { height: 23px; line-height: 20px; color: #222; }
td:nth-child(1) { letter-spacing: .6px; padding-left: 1px; }
td:nth-child(2) { letter-spacing: .25px; padding-left: 1px; }
td:nth-child(6), td:nth-child(8) { letter-spacing: .55px; padding-left: 1px; }
td:nth-child(7) { letter-spacing: .14px; }
.c1 { width: 113px; } .c2 { width: 105px; } .c3 { width: 89px; } .c4 { width: 72px; } .c5 { width: 89px; } .c6 { width: 105px; } .c7 { width: 156px; } .c8 { width: 105px; } .c9 { width: 156px; }
.ok { background: #9ff3a1; }
.bad { background: #ffb0b0; }
.pager { height: 27px; background: linear-gradient(#e6f2fc 50%, #d9eefa 50%, #e9f6fd); display: flex; justify-content: space-between; padding: 0 5px 0 408px; font-size: 11px; letter-spacing: .1px; }
.pg { display: flex; align-items: center; height: 27px; }
.pg i { width: 2px; height: 18px; background: #d3dde3; margin: 0 4px 0 0; }
.pg span + i { margin: 0 7px 0 4px; }
.num { width: 36px; height: 19px; border: 1px solid #555; border-radius: 2px; background: #fff; margin: 0 4px 0 3px; font-size: 10px; line-height: 17px; padding-left: 3px; color: #26638c; }
.cnt { line-height: 21px; letter-spacing: .42px; }
.nextbox { width: 226px; height: 20px; margin: 25px 0 0 5px; border: 1px solid #b6daec; background: #dcf0fb; }
.scroll { width: 17px; background: #f1f1f1; display: flex; flex-direction: column; align-items: center; padding: 7px 0; }
.scroll i { width: 13px; height: 453px; background: #c1c1c1; margin: 17px 0 auto; }

.downloads { height: 57px; flex: none; border-top: 1px solid #d6d8da; display: flex; align-items: center; padding: 0 0 2px 22px; }
.file { margin-left: 14px; font-size: 13px; width: 128px; letter-spacing: -.4px; padding-top: 2px; }
.up { margin-left: 31px; }
.downloads i { margin-left: 18px; width: 1px; height: 44px; background: #c4c6c8; }
.showall { margin-left: auto; width: 78px; height: 32px; border: 1px solid #d6d8da; border-radius: 4px; text-align: center; line-height: 29px; color: #1a73e8; letter-spacing: -.1px; }
.dx { margin: 0 12px 0 12px; color: #6b6f73; }

.taskbar { height: 30px; flex: none; background: #080a12; display: flex; justify-content: space-between; color: #fff; }
.apps { display: grid; grid-template-columns: 36px 36px 37px 38px 37px 37px 38px 36px; }
.apps a, .tray a { display: flex; align-items: center; justify-content: center; height: 30px; }
.apps .run { background: linear-gradient(#76b9ed, #76b9ed) 50% 100% / 28px 2px no-repeat; }
.apps .act { background: linear-gradient(#76b9ed, #76b9ed) 0 100% / 36px 2px no-repeat #3c4046; }
.tray { display: flex; align-items: center; }
.tray a { width: 24px; }
.tray .ppl { margin-right: 6px; }
.tray .wf { width: 26px; }
.tray .vol { width: 20px; }
.clock { margin-left: 8px; width: 49px; font-size: 12px; letter-spacing: -.45px; }
.tray .note { margin-left: 14px; }
.tray i { width: 1px; height: 30px; background: #55585e; margin: 0 4px 0 16px; }
```
